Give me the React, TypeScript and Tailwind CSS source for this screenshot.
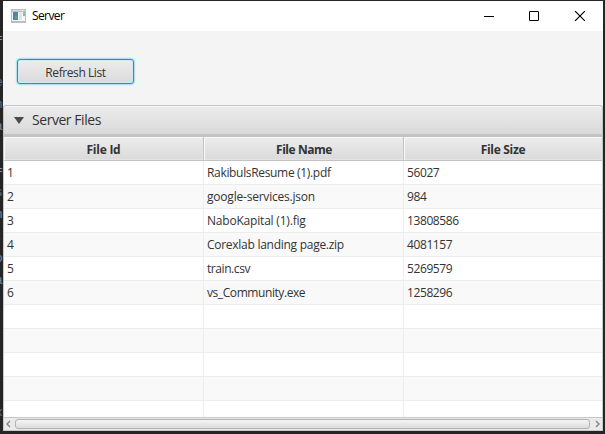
const rows = [
  ["1", "RakibulsResume (1).pdf", "56027"],
  ["2", "google-services.json", "984"],
  ["3", "NaboKapital (1).fig", "13808586"],
  ["4", "Corexlab landing page.zip", "4081157"],
  ["5", "train.csv", "5269579"],
  ["6", "vs_Community.exe", "1258296"],
  ["", "", ""],
  ["", "", ""],
  ["", "", ""],
  ["", "", ""],
  ["", "", ""],
];

// Letter spacing of each file name, by row.
const nameTracking = [
  "tracking-[-0.33px]",
  "tracking-[-0.21px]",
  "tracking-[-0.2px]",
  "tracking-[-0.27px]",
  "tracking-[-0.43px]",
  "tracking-[-0.42px]",
];

const columns = [
  { label: "File Id", width: "w-[200px]", spacing: "tracking-[-0.25px]" },
  { label: "File Name", width: "w-[200px]", spacing: "pl-px tracking-[-0.45px]" },
  { label: "File Size", width: "w-[199px]", spacing: "tracking-[-0.3px]" },
];

// Slivers of the editor text behind the window's left edge.
const fragments = [
  { y: 31, t: "=", c: "text-[#8a94a0]" },
  { y: 75, t: "e", c: "text-[#66707c]" },
  { y: 97, t: "n", c: "text-[#66707c]" },
  { y: 119, t: "a", c: "text-[#7c8794]" },
  { y: 163, t: "=", c: "text-[#8a94a0]" },
  { y: 185, t: "s", c: "text-[#66707c]" },
  { y: 207, t: "n", c: "text-[#7c8794]" },
  { y: 229, t: ";", c: "text-[#cc6a32]" },
  { y: 251, t: "o", c: "text-[#7c8794]" },
  { y: 273, t: "a", c: "text-[#7c8794]" },
  { y: 405, t: "x", c: "text-[#6b7078]" },
];

function TitleBar() {
  return (
    <header className="flex h-[30px] shrink-0 items-center bg-white">
      <svg className="ml-2 shrink-0" width="15" height="14" viewBox="0 0 15 14" shapeRendering="crispEdges">
        <rect width="15" height="14" fill="#b9bec3" />
        <rect x="1" y="1" width="13" height="1" fill="#d7dbdf" />
        <rect x="11" y="1" width="1" height="1" fill="#fff" />
        <rect x="1" y="3" width="13" height="9" fill="#f5f5f6" />
        <rect x="2" y="3" width="5" height="8" fill="#4a8c9b" />
        <rect x="2" y="3" width="2" height="5" fill="#4d83b0" />
        <rect x="4" y="7" width="3" height="3" fill="#50a080" />
        <rect x="8" y="3" width="3" height="8" fill="#e4e5e7" />
        <rect x="12" y="3" width="2" height="2" fill="#91b7d8" />
        <rect x="12" y="5" width="2" height="2" fill="#82bda0" />
      </svg>
      <span className="ml-[6px] text-[12px] tracking-[-0.6px] text-black">Server</span>
      <svg className="ml-auto mr-[18px] shrink-0" width="101" height="10" viewBox="0 0 101 10" fill="none" stroke="#000">
        <path d="M0 5.5H10" />
        <path d="M45.5 .5H54.5V9.5H45.5Z" />
        <path d="M91 0L101 10M101 0L91 10" strokeWidth="1.1" />
      </svg>
    </header>
  );
}

function TableHeader() {
  return (
    <div className="flex h-6 shrink-0 border-b border-[#c3c3c3] text-[12px] font-bold text-[#333]">
      {columns.map((column) => (
        <div
          key={column.label}
          className={`flex shrink-0 items-center justify-center border-r border-[#c3c3c3] bg-linear-to-b from-[#ededed] to-[#dadada] pt-[3px] shadow-[inset_1px_1px_0_#fafafa,inset_-1px_-1px_0_#e4e4e4] ${column.width} ${column.spacing}`}
        >
          {column.label}
        </div>
      ))}
    </div>
  );
}

function ScrollBar() {
  return (
    <div className="flex h-[14px] shrink-0 items-center border-y border-[#c8c8c8] bg-[#eaeaea]">
      <svg width="11" height="12" viewBox="0 0 11 12" fill="none" stroke="#858585" strokeWidth="1.4">
        <path d="M6 3L3 6L6 9" />
      </svg>
      <div className="h-[10px] flex-1 rounded-[3px] border border-[#b1b1b1] bg-linear-to-b from-[#f5f5f5] to-[#dcdcdc]" />
      <svg width="12" height="12" viewBox="0 0 12 12" fill="none" stroke="#858585" strokeWidth="1.4">
        <path d="M6 3L9 6L6 9" />
      </svg>
    </div>
  );
}

export default function App() {
  return (
    <div className="relative h-[434px] w-[605px] overflow-hidden bg-[#252526] pl-[3px] pt-px font-['Open_Sans','Noto_Sans',sans-serif]">
      {fragments.map((f) => (
        <span
          key={f.y}
          className={`absolute left-[-5px] font-['Liberation_Mono',monospace] text-[13px] leading-[15px] ${f.c}`}
          style={{ top: f.y }}
        >
          {f.t}
        </span>
      ))}
      <main className="relative flex h-[430px] w-[600px] flex-col overflow-hidden bg-[#f4f4f4]">
        <TitleBar />
        <div className="h-[74px] shrink-0 px-[14px] pt-[28px]">
          <button className="flex h-[25px] w-[117px] items-center justify-center rounded-[3px] border border-[#039ed3] bg-linear-to-b from-[#ededed] to-[#dadada] pt-[2px] text-[12px] tracking-[-0.42px] text-[#333] shadow-[0_0_2px_#039ed3,inset_0_0_0_1px_#d5e8ef]">
            Refresh List
          </button>
        </div>
        <section className="flex min-h-0 flex-1 flex-col">
          <div className="flex h-8 shrink-0 items-center rounded-t-[3px] border border-b-3 border-[#c3c3c3] bg-linear-to-b from-[#ececec] to-[#d9d9d9] shadow-[inset_0_1px_0_#f8f8f8]">
            <svg className="ml-[10px]" width="10" height="7" viewBox="0 0 10 7">
              <path d="M0 0H10L5 7Z" fill="#4b4b4b" />
            </svg>
            <h1 className="ml-2 pb-px text-[14px] tracking-[-0.45px] text-[#333]">Server Files</h1>
          </div>
          <div className="flex min-h-0 flex-1 flex-col border-x border-[#c8c8c8]">
            <TableHeader />
            <div className="min-h-0 flex-1 overflow-hidden text-[12px] text-[#333]">
              {rows.map((row, i) => (
                <div key={i} className={`flex h-6 border-b border-[#ededed] ${i % 2 ? "bg-[#f9f9f9]" : "bg-white"}`}>
                  {row.map((cell, j) => (
                    <div
                      key={j}
                      className={`flex w-[200px] shrink-0 items-center whitespace-nowrap border-r border-[#ededed] pl-[3px] ${j === 1 ? nameTracking[i] ?? "" : "tracking-[-0.4px]"}`}
                    >
                      {cell}
                    </div>
                  ))}
                </div>
              ))}
            </div>
            <ScrollBar />
          </div>
        </section>
      </main>
    </div>
  );
}
